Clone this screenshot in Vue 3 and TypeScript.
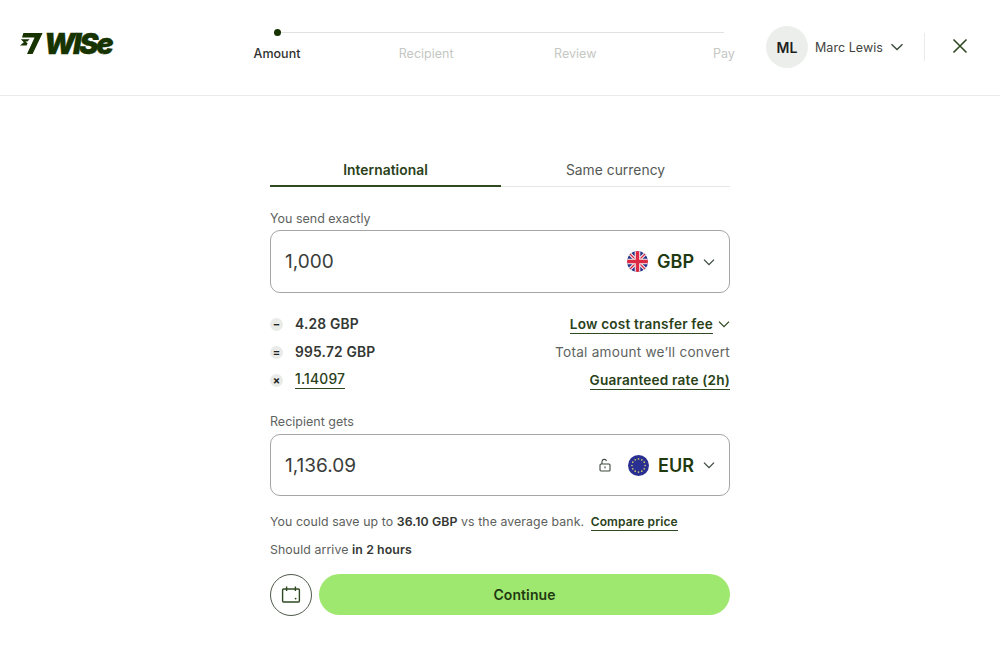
<template>
  <div class="page">
    <header class="topbar">
      <div class="logo" aria-label="Wise">
        <svg class="logo__mark" width="24" height="21" viewBox="0 0 24 21" aria-hidden="true">
          <path d="M3.4 0H22.6L12.6 21H7L14.6 4.6H2Z" fill="#163300" />
          <path d="M0.8 6.2H9.6L7.4 8.6H5.2L7.6 10.2L6.6 12.6H0L3.8 9.2Z" fill="#163300" />
        </svg>
        <span class="logo__word">WISe</span>
      </div>

      <nav class="stepper">
        <div class="stepper__track">
          <span class="stepper__dot"></span>
        </div>
        <ol class="stepper__labels">
          <li v-for="(step, i) in steps" :key="step" :class="{ active: i === 0 }">{{ step }}</li>
        </ol>
      </nav>

      <div class="account">
        <span class="account__avatar">ML</span>
        <span class="account__name">Marc Lewis</span>
        <svg class="account__chevron" width="14" height="14" viewBox="0 0 14 14" aria-hidden="true">
          <path d="M1.5 4.2 7 9.6l5.5-5.4" fill="none" stroke="#3a4a3c" stroke-width="1.4" />
        </svg>
      </div>
      <span class="topbar__divider"></span>
      <button type="button" class="close" aria-label="Close">
        <svg width="16" height="16" viewBox="0 0 16 16" aria-hidden="true">
          <path d="M1.5 1.5l13 13M14.5 1.5l-13 13" fill="none" stroke="#2f4a22" stroke-width="1.6" />
        </svg>
      </button>
    </header>

    <main class="form">
      <div class="tabs">
        <div class="tab tab--active">International</div>
        <div class="tab">Same currency</div>
      </div>

      <label class="field-label field-label--send">You send exactly</label>
      <div class="amount-box amount-box--send">
        <span class="amount-box__value">1,000</span>
        <svg class="flag flag--uk" width="21" height="21" viewBox="0 0 21 21" aria-hidden="true">
          <defs>
            <clipPath id="flag-uk"><circle cx="10.5" cy="10.5" r="10.5" /></clipPath>
          </defs>
          <g clip-path="url(#flag-uk)">
            <rect width="21" height="21" fill="#27338a" />
            <path d="M0 0 21 21M21 0 0 21" stroke="#f4f0f0" stroke-width="3.4" />
            <path d="M0 0 21 21M21 0 0 21" stroke="#dc2a45" stroke-width="1.3" />
            <path d="M10.5 0v21M0 10.5h21" stroke="#f4f0f0" stroke-width="5.6" />
            <path d="M10.5 0v21M0 10.5h21" stroke="#dc2a45" stroke-width="3.4" />
          </g>
        </svg>
        <span class="currency">GBP</span>
        <svg class="chevron" width="12" height="12" viewBox="0 0 12 12" aria-hidden="true">
          <path d="M1 3.6 6 8.6l5-5" fill="none" stroke="#3a4a3c" stroke-width="1.3" />
        </svg>
      </div>

      <div class="breakdown">
        <div v-for="row in rows" :key="row.symbol" class="breakdown__row">
          <span class="breakdown__icon">{{ row.symbol }}</span>
          <span class="breakdown__value" :class="{ 'link': row.valueLink }">{{ row.value }}</span>
          <span class="breakdown__side">
            <span :class="row.sideLink ? 'link link--side' : 'muted'">{{ row.side }}</span>
            <svg v-if="row.chevron" width="12" height="12" viewBox="0 0 12 12" aria-hidden="true">
              <path d="M1 3.6 6 8.6l5-5" fill="none" stroke="#2f4a22" stroke-width="1.3" />
            </svg>
          </span>
        </div>
      </div>

      <label class="field-label field-label--get">Recipient gets</label>
      <div class="amount-box">
        <span class="amount-box__value">1,136.09</span>
        <svg class="lock" width="12" height="14" viewBox="0 0 12 14" aria-hidden="true">
          <path d="M3 6V3.6a2.3 2.3 0 0 1 4.5-.6" fill="none" stroke="#3d4a3e" stroke-width="1.1" />
          <rect x="1" y="6" width="10" height="7" rx="1" fill="none" stroke="#3d4a3e" stroke-width="1.1" />
          <path d="M6 8.6v1.6" stroke="#3d4a3e" stroke-width="1.2" />
        </svg>
        <svg class="flag" width="21" height="21" viewBox="0 0 21 21" aria-hidden="true">
          <circle cx="10.5" cy="10.5" r="10.5" fill="#2a2f92" />
          <circle
            v-for="star in euStars"
            :key="star.x"
            :cx="star.x"
            :cy="star.y"
            r="0.85"
            fill="#c9c66a"
          />
        </svg>
        <span class="currency">EUR</span>
        <svg class="chevron" width="12" height="12" viewBox="0 0 12 12" aria-hidden="true">
          <path d="M1 3.6 6 8.6l5-5" fill="none" stroke="#3a4a3c" stroke-width="1.3" />
        </svg>
      </div>

      <p class="note note--save">
        You could save up to <b>36.10 GBP</b> vs the average bank.
        <span class="link link--small">Compare price</span>
      </p>
      <p class="note note--arrive">Should arrive <b>in 2 hours</b></p>

      <div class="actions">
        <button type="button" class="schedule" aria-label="Schedule">
          <svg width="20" height="18" viewBox="0 0 20 18" aria-hidden="true">
            <rect x="1.6" y="3" width="16.8" height="13" rx="1" fill="none" stroke="#2f4a22" stroke-width="1.4" />
            <path d="M5.6 0.6V5M14.4 0.6V5" stroke="#2f4a22" stroke-width="1.4" />
            <circle cx="14.6" cy="12.6" r="0.9" fill="#2f4a22" />
          </svg>
        </button>
        <button type="button" class="continue">Continue</button>
      </div>
    </main>
  </div>
</template>

<script setup lang="ts">
interface BreakdownRow {
  symbol: string;
  value: string;
  side: string;
  valueLink?: boolean;
  sideLink?: boolean;
  chevron?: boolean;
}

const steps = ['Amount', 'Recipient', 'Review', 'Pay'];

const rows: BreakdownRow[] = [
  { symbol: '−', value: '4.28 GBP', side: 'Low cost transfer fee', sideLink: true, chevron: true },
  { symbol: '=', value: '995.72 GBP', side: 'Total amount we’ll convert' },
  { symbol: '×', value: '1.14097', side: 'Guaranteed rate (2h)', valueLink: true, sideLink: true },
];

// twelve stars round the EU flag
const euStars = Array.from({ length: 12 }, (_, i) => {
  const a = (i / 12) * Math.PI * 2;
  return { x: 10.5 + Math.cos(a) * 6.6, y: 10.5 + Math.sin(a) * 6.6 };
});
</script>

<style>
html,
body {
  margin: 0;
  background: #fff;
}
</style>

<style scoped>
.page {
  min-height: 667px;
  font-family: Inter, "Noto Sans", sans-serif;
  color: #454745;
  background: #fff;
}

.topbar {
  display: flex;
  align-items: flex-start;
  height: 95px;
  border-bottom: 1px solid #e8ebe7;
  box-sizing: content-box;
}

.logo {
  display: flex;
  align-items: center;
  width: 230px;
  height: 21px;
  margin: 33px 0 0 20px;
}
.logo__mark {
  flex-shrink: 0;
}
.logo__word {
  margin-left: 0;
  font-size: 29px;
  font-weight: 900;
  font-style: italic;
  letter-spacing: -2.3px;
  line-height: 20px;
  color: #163300;
  -webkit-text-stroke: 0.3px #163300;
}

.stepper {
  flex-shrink: 0;
  width: 501px;
  margin-top: 28px;
}
.stepper__track {
  position: relative;
  height: 8px;
  margin: 0 27px;
}
.stepper__track::before {
  content: '';
  display: block;
  position: absolute;
  left: 0;
  right: 0;
  top: 4px;
  height: 1px;
  background: #dfe2de;
}
.stepper__dot {
  position: absolute;
  left: -3px;
  top: 1px;
  width: 7px;
  height: 7px;
  border-radius: 50%;
  background: #163300;
}
.stepper__labels {
  display: flex;
  justify-content: space-between;
  margin: 9.5px 0 0;
  padding: 0;
  list-style: none;
  font-size: 12.5px;
  line-height: 16px;
  color: #c4c7c3;
}
.stepper__labels li {
  flex: 0 0 54px;
  text-align: center;
  white-space: nowrap;
}
.stepper__labels .active {
  color: #2f312f;
  font-weight: 500;
}

.account {
  display: flex;
  align-items: center;
  flex-shrink: 0;
  width: 158px;
  margin-top: 26px;
  margin-left: 15px;
}
.account__avatar {
  display: flex;
  align-items: center;
  justify-content: center;
  flex-shrink: 0;
  width: 42px;
  height: 42px;
  border-radius: 50%;
  background: #ebeeea;
  font-size: 14px;
  font-weight: 600;
  color: #1d1f1d;
}
.account__name {
  margin-left: 7px;
  font-size: 12.5px;
  letter-spacing: 0.05px;
  color: #3f4441;
  white-space: nowrap;
}
.account__chevron {
  margin-left: 7px;
}

.topbar__divider {
  width: 1px;
  height: 28px;
  margin-top: 33px;
  background: #e8ebe7;
}

.close {
  display: flex;
  margin: 38px 0 0 27px;
  padding: 0;
  border: 0;
  background: none;
}

.form {
  width: 460px;
  margin: 0 auto;
  padding-top: 59px;
}

.tabs {
  display: grid;
  grid-template-columns: 231px 229px;
  border-bottom: 1px solid #e4e7e3;
}
.tab {
  height: 32px;
  margin-bottom: -1px;
  box-sizing: border-box;
  padding-top: 6px;
  font-size: 13.8px;
  line-height: 18px;
  letter-spacing: 0.05px;
  text-align: center;
  color: #545854;
}
.tab--active {
  border-bottom: 2px solid #2f4a22;
  font-weight: 600;
  color: #2a4119;
}

.field-label {
  display: block;
  font-size: 12.5px;
  line-height: 16px;
  letter-spacing: 0;
  color: #5f635f;
}
.field-label--send {
  margin: 24px 0 3px;
}
.field-label--get {
  margin: 20px 0 4px;
}

.amount-box {
  display: flex;
  align-items: center;
  height: 62px;
  box-sizing: border-box;
  padding: 0 14px;
  border: 1px solid #a3a6a2;
  border-radius: 10px;
}
.amount-box--send {
  height: 63px;
}
.amount-box__value {
  flex: 1;
  font-size: 19px;
  color: #3a3d3a;
}
.flag--uk {
  margin-left: -1px;
}
.currency {
  margin-left: 9px;
  font-size: 18px;
  font-weight: 600;
  color: #1f3a10;
}
.chevron {
  margin-left: 9px;
}
.lock {
  margin-right: 17px;
}

.breakdown {
  display: grid;
  grid-auto-rows: 28px;
  margin-top: 17px;
}
.breakdown__row {
  display: flex;
  align-items: center;
}
.breakdown__icon {
  display: flex;
  align-items: center;
  justify-content: center;
  width: 13px;
  height: 13px;
  border-radius: 50%;
  background: #e8ebe7;
  font-size: 11px;
  line-height: 1;
  font-weight: 700;
  color: #222;
}
.breakdown__value {
  margin-left: 12px;
  font-size: 13.8px;
  font-weight: 600;
  letter-spacing: 0.2px;
  color: #333733;
}
.breakdown__value.link {
  font-weight: 500;
  color: #2a4119;
}
.breakdown__side {
  display: flex;
  align-items: center;
  gap: 5px;
  margin-left: auto;
}
.muted {
  font-size: 13.6px;
  letter-spacing: 0.25px;
  color: #606460;
}
.link {
  border-bottom: 1px solid #2f4a22;
  color: #2a4119;
  padding-bottom: 1px;
}
.link--side {
  margin-top: 2px;
  font-size: 13.6px;
  font-weight: 600;
  letter-spacing: 0.2px;
}
.link--small {
  margin-left: 3px;
  font-size: 12px;
  font-weight: 600;
}

.note {
  margin: 0;
  font-size: 12.3px;
  line-height: 16px;
  letter-spacing: 0.1px;
  color: #5c605c;
}
.note b {
  font-weight: 600;
  color: #333733;
}
.note--save {
  margin-top: 18px;
}
.note--arrive {
  margin-top: 12px;
}

.actions {
  display: flex;
  gap: 7px;
  margin-top: 16px;
}
.schedule {
  display: flex;
  align-items: center;
  justify-content: center;
  flex-shrink: 0;
  width: 42px;
  height: 42px;
  padding: 0;
  border: 1px solid #4f5a4a;
  border-radius: 50%;
  background: #fff;
}
.continue {
  flex: 1;
  height: 41px;
  border: 0;
  border-radius: 21px;
  background: #9fe870;
  font-family: inherit;
  font-size: 14px;
  font-weight: 600;
  letter-spacing: 0.1px;
  color: #1f3a10;
}
</style>
